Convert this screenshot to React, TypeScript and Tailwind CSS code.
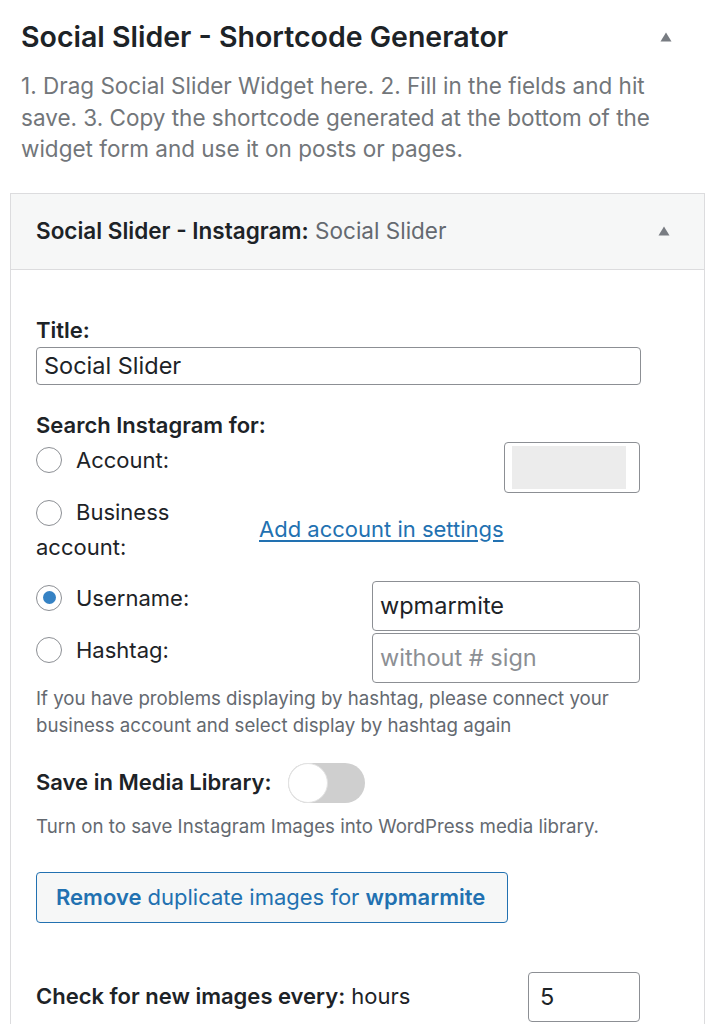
import React from 'react';

function Caret() {
  return (
    <svg width="12" height="10" viewBox="0 0 12 10" className="shrink-0">
      <path d="M6 0.5 L11.5 9.5 L0.5 9.5 Z" fill="#787c82" />
    </svg>
  );
}

function Radio({ checked = false }: { checked?: boolean }) {
  return (
    <span className="inline-flex items-center justify-center w-[26px] h-[26px] rounded-full border-[1.5px] border-[#8c8f94] bg-white align-middle shrink-0">
      {checked && <span className="w-[13px] h-[13px] rounded-full bg-[#3582c4]" />}
    </span>
  );
}

export default function App() {
  return (
    <div className="w-[706px] h-[1024px] overflow-hidden bg-white font-['Inter',sans-serif] text-[#1d2327]">
      {/* sidebar heading */}
      <div className="pl-[21px] pr-[34px] pt-[19px] flex items-center justify-between">
        <h2 className="text-[28.5px] leading-[36px] font-semibold">
          Social Slider - Shortcode Generator
        </h2>
        <Caret />
      </div>
      <p className="pl-[21px] mt-[15px] w-[665px] text-[22.5px] leading-[31.5px] text-[#72767a]">
        1. Drag Social Slider Widget here. 2. Fill in the fields and hit save. 3. Copy the
        shortcode generated at the bottom of the widget form and use it on posts or pages.
      </p>

      {/* widget */}
      <div className="ml-[10px] mt-[28px] w-[695px] border border-[#dcdcde] border-b-0">
        <div className="h-[76px] bg-[#f6f7f7] border-b border-[#dcdcde] flex items-center justify-between pl-[25px] pr-[34px]">
          <div className="text-[22.5px] font-semibold">
            Social Slider - Instagram:<span className="font-normal text-[#646970]"> Social Slider</span>
          </div>
          <Caret />
        </div>

        <div className="pl-[25px] pt-[46px] pb-[40px]">
          <div className="w-[605px]">
            <label className="block text-[22px] leading-[28px] font-semibold">Title:</label>
            <div className="mt-[3px] h-[38px] border border-[#8c8f94] rounded-[4px] px-[7px] flex items-center text-[23.5px]">
              Social Slider
            </div>

            <div className="mt-[26px] text-[22px] leading-[28px] font-semibold">Search Instagram for:</div>

            {/* account */}
            <div className="mt-[3px] flex items-start">
              <div className="w-[468px] pt-[4px] flex items-center gap-[14px] text-[22px] leading-[28px]">
                <Radio />
                <span>Account:</span>
              </div>
              <div className="w-[136px] h-[51px] border border-[#8c8f94] rounded-[4px] pl-[7px] pr-[13px] py-[3px]">
                <div className="w-full h-full bg-[#ececec]" />
              </div>
            </div>

            {/* business */}
            <div className="mt-[2px] flex items-center">
              <div className="w-[223px] text-[22px] leading-[33px]">
                <Radio />
                <span className="ml-[14px] align-middle">Business</span>
                <br />
                <span className="align-middle">account:</span>
              </div>
              <a className="text-[22px] text-[#2271b1] underline underline-offset-[3px]" href="#">
                Add account in settings
              </a>
            </div>

            {/* username */}
            <div className="mt-[17px] flex items-start">
              <div className="w-[336px] pt-[3px] flex items-center gap-[14px] text-[22px] leading-[28px]">
                <Radio checked />
                <span>Username:</span>
              </div>
              <div className="w-[268px] h-[50px] border border-[#8c8f94] rounded-[4px] px-[7px] flex items-center text-[23.5px]">
                wpmarmite
              </div>
            </div>

            {/* hashtag */}
            <div className="mt-[2px] flex items-start">
              <div className="w-[336px] pt-[3px] flex items-center gap-[14px] text-[22px] leading-[28px]">
                <Radio />
                <span>Hashtag:</span>
              </div>
              <div className="w-[268px] h-[50px] border border-[#8c8f94] rounded-[4px] px-[7px] flex items-center text-[23.5px] text-[#8c8f94]">
                without # sign
              </div>
            </div>

            <p className="mt-[2px] w-[600px] text-[18.7px] leading-[27px] text-[#646970]">
              If you have problems displaying by hashtag, please connect your business account and
              select display by hashtag again
            </p>

            <div className="mt-[24px] flex items-center h-[40px]">
              <span className="text-[22px] font-semibold">Save in Media Library:</span>
              <span className="ml-[17px] relative w-[77px] h-[40px] rounded-full bg-[#cfcfcf]">
                <span className="absolute left-0 top-0 w-[40px] h-[40px] rounded-full bg-white border border-[#e2e2e2]" />
              </span>
            </div>

            <p className="mt-[10px] text-[18.7px] leading-[27px] text-[#646970]">
              Turn on to save Instagram Images into WordPress media library.
            </p>

            <button className="mt-[32px] w-[472px] h-[51px] border border-[#2271b1] rounded-[4px] bg-[#f6f7f7] text-[22px] text-[#2271b1] text-left pl-[19px]">
              <span className="font-semibold">Remove</span> duplicate images for{' '}
              <span className="font-semibold">wpmarmite</span>
            </button>

            <div className="mt-[49px] flex items-center">
              <div className="w-[492px] text-[22px]">
                <span className="font-semibold">Check for new images every:</span> hours
              </div>
              <div className="w-[112px] h-[50px] border border-[#8c8f94] rounded-[4px] px-[11px] flex items-center text-[23.5px]">
                5
              </div>
            </div>
          </div>
        </div>
      </div>
    </div>
  );
}
